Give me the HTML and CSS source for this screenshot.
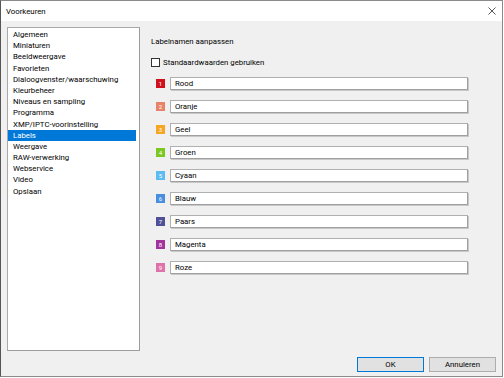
FILE: index.html
```html
<!DOCTYPE html>
<html lang="nl">
<head>
  <meta charset="UTF-8" />
  <title>Voorkeuren</title>
  <link rel="stylesheet" href="styles.css">
</head>
<body>
  <div class="window">
    <div class="titlebar">
      <span class="title">Voorkeuren</span>
      <svg class="close" width="8" height="8" viewBox="0 0 8 8">
        <path d="M0.5 0.5 L7.5 7.5 M7.5 0.5 L0.5 7.5" stroke="#444" stroke-width="0.9" fill="none" />
      </svg>
    </div>
    <div class="main">
      <ul class="nav">
        <li>Algemeen</li>
        <li>Miniaturen</li>
        <li>Beeldweergave</li>
        <li>Favorieten</li>
        <li>Dialoogvenster/waarschuwing</li>
        <li>Kleurbeheer</li>
        <li>Niveaus en sampling</li>
        <li>Programma</li>
        <li>XMP/IPTC-voorinstelling</li>
        <li class="active">Labels</li>
        <li>Weergave</li>
        <li>RAW-verwerking</li>
        <li>Webservice</li>
        <li>Video</li>
        <li>Opslaan</li>
      </ul>
      <div class="panel">
        <div class="panel-title">Labelnamen aanpassen</div>
        <label class="check-row"><span class="checkbox"></span>Standaardwaarden gebruiken</label>
        <div class="labels">
          <div class="label-row"><span class="chip c1">1</span><input class="field" type="text" value="Rood"></div>
          <div class="label-row"><span class="chip c2">2</span><input class="field" type="text" value="Oranje"></div>
          <div class="label-row"><span class="chip c3">3</span><input class="field" type="text" value="Geel"></div>
          <div class="label-row"><span class="chip c4">4</span><input class="field" type="text" value="Groen"></div>
          <div class="label-row"><span class="chip c5">5</span><input class="field" type="text" value="Cyaan"></div>
          <div class="label-row"><span class="chip c6">6</span><input class="field" type="text" value="Blauw"></div>
          <div class="label-row"><span class="chip c7">7</span><input class="field" type="text" value="Paars"></div>
          <div class="label-row"><span class="chip c8">8</span><input class="field" type="text" value="Magenta"></div>
          <div class="label-row"><span class="chip c9">9</span><input class="field" type="text" value="Roze"></div>
        </div>
      </div>
    </div>
    <div class="footer">
      <button class="btn btn-default">OK</button>
      <button class="btn">Annuleren</button>
    </div>
  </div>
</body>
</html>
```

FILE: styles.css
```css
body {
  margin: 0;
  background: #fff;
  font-family: Roboto, "Noto Sans", sans-serif;
  font-size: 7.8px;
  color: #000;
}
.window {
  width: 503px;
  height: 377px;
  box-sizing: border-box;
  border: 1px solid #8a8a8a;
  border-left-color: #555;
  background: #f0f0f0;
  display: flex;
  flex-direction: column;
}
.titlebar {
  height: 20px;
  background: #fff;
  display: flex;
  align-items: center;
  justify-content: space-between;
  padding: 0 6px 0 5px;
}
.close {
  display: block;
}
.main {
  display: flex;
  height: 324px;
  padding: 6px 0 0 6px;
}
.nav {
  list-style: none;
  margin: 0;
  padding: 1px 3px 0 0;
  width: 133px;
  height: 324px;
  box-sizing: border-box;
  background: #fff;
  border: 1px solid #a9a9a9;
  border-right-color: #9c9c9c;
  border-bottom-color: #9c9c9c;
}
.nav li {
  height: 11.2px;
  line-height: 11.2px;
  padding-left: 5px;
  white-space: nowrap;
}
.nav li.active {
  background: #0078d7;
  color: #fff;
}
.panel {
  margin-left: 11px;
  flex: 1;
}
.panel-title {
  margin-top: 9px;
  line-height: 12px;
}
.check-row {
  display: flex;
  align-items: center;
  gap: 3px;
  margin-top: 8px;
  height: 12px;
}
.checkbox {
  width: 9px;
  height: 9px;
  box-sizing: border-box;
  border: 1px solid #333;
  background: #fff;
}
.labels {
  display: flex;
  flex-direction: column;
  gap: 9px;
  margin-top: 8px;
}
.label-row {
  display: flex;
  align-items: center;
  height: 14px;
  padding-left: 5px;
  gap: 5px;
}
.chip {
  width: 9px;
  height: 9px;
  color: #fff;
  font-size: 6px;
  line-height: 9px;
  text-align: center;
  flex: none;
}
.c1 { background: #d0101d; }
.c2 { background: #e8836a; }
.c3 { background: #f5a623; }
.c4 { background: #7cc823; }
.c5 { background: #5cbcf2; }
.c6 { background: #4a8ee0; }
.c7 { background: #505099; }
.c8 { background: #a3339c; }
.c9 { background: #df72a8; }
.field {
  width: 298px;
  height: 13px;
  margin: 0;
  padding: 0 0 0 4px;
  box-sizing: border-box;
  border: 1px solid #b0b0b0;
  border-right-color: #a0a0a0;
  border-bottom-color: #a0a0a0;
  box-shadow: 1px 1px 0 #c8c8c8;
  background: #fff;
  font-family: inherit;
  font-size: 7.8px;
  color: #000;
}
.footer {
  display: flex;
  justify-content: flex-end;
  gap: 5px;
  padding: 6px 6px 0 0;
}
.btn {
  width: 67px;
  height: 15px;
  padding: 0;
  box-sizing: border-box;
  background: #e1e1e1;
  border: 1px solid #adadad;
  font-family: inherit;
  font-size: 7.8px;
  color: #000;
}
.btn-default {
  border: 1.5px solid #0078d7;
}
```
